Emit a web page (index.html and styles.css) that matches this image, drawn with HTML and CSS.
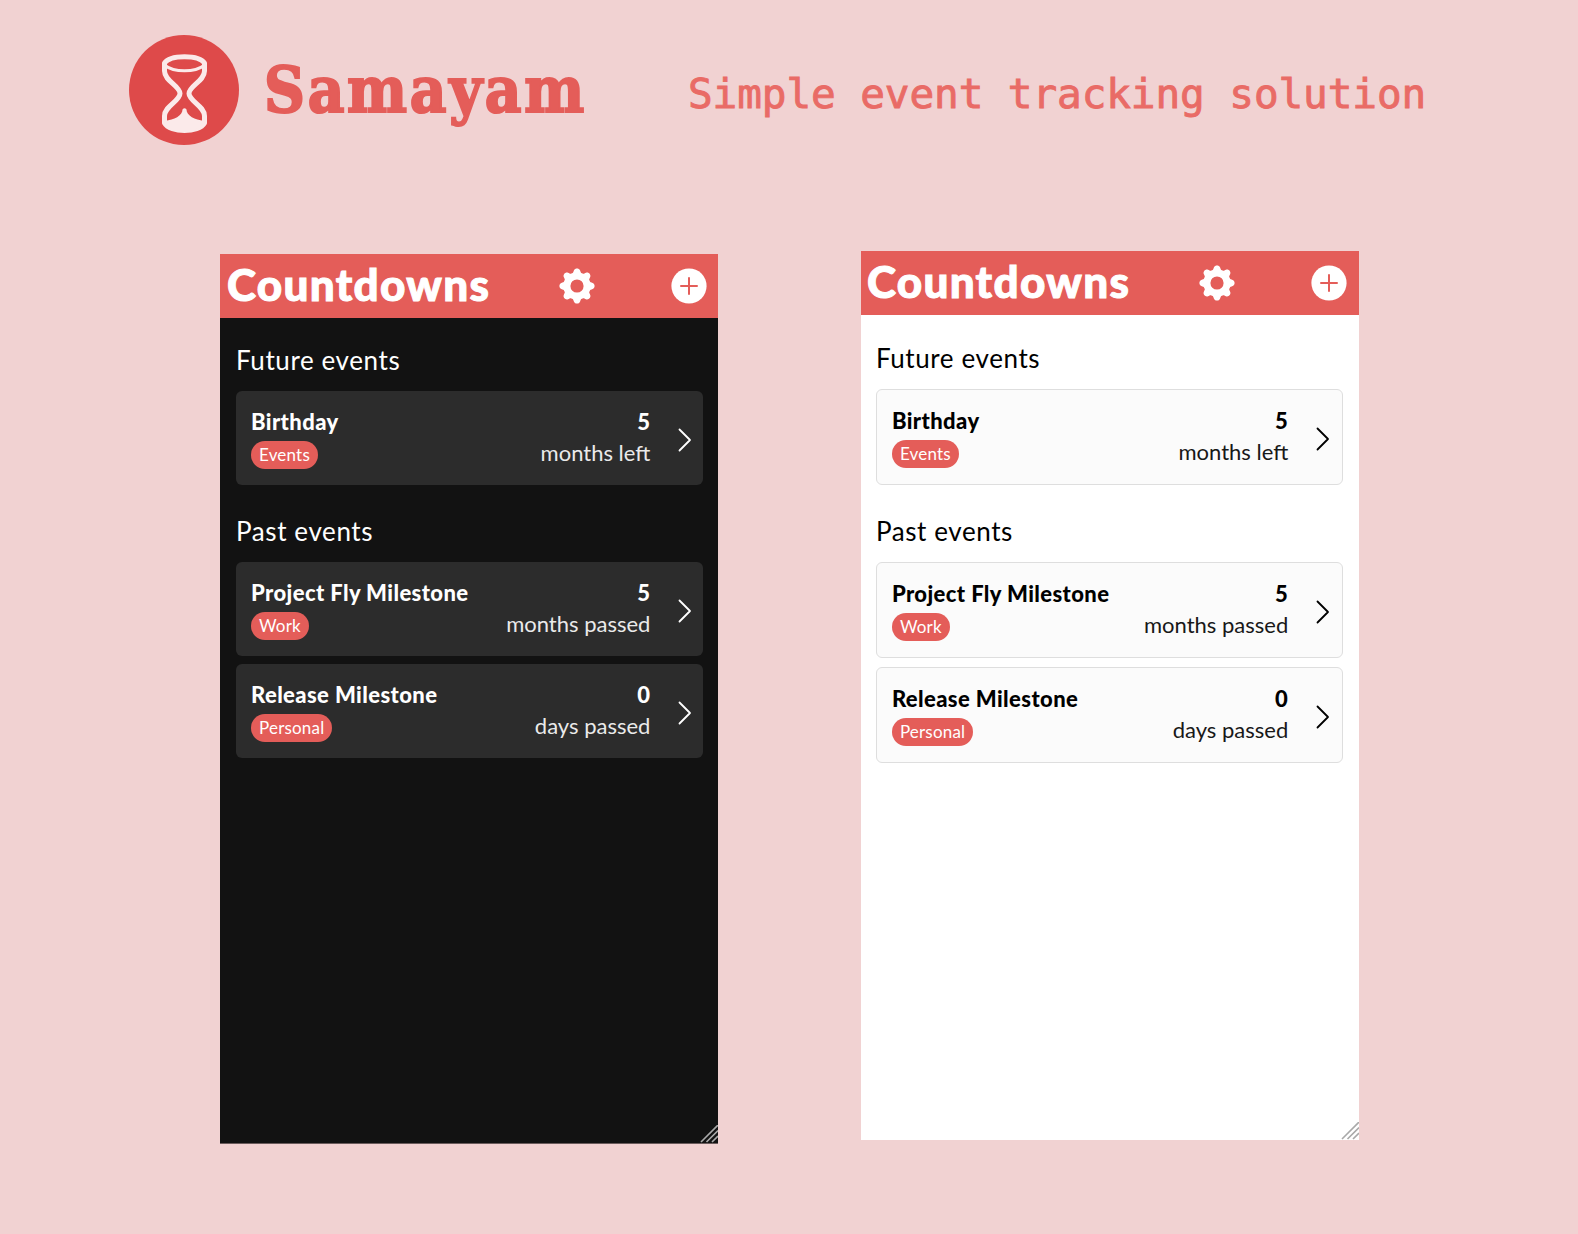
FILE: index.html
```
<!DOCTYPE html>
<html lang="en">
<head>
<meta charset="utf-8">
<title>Samayam</title>
<link rel="stylesheet" href="styles.css">
</head>
<body>
<svg class="defs" width="0" height="0" aria-hidden="true">
  <symbol id="gear" viewBox="-18 -18 36 36">
    <g fill="#fff">
      <path fill-rule="evenodd" d="M-13.500 0a13.500 13.500 0 1 0 27 0a13.500 13.500 0 1 0-27 0ZM-6.600 0a6.600 6.600 0 1 1 13.200 0a6.600 6.600 0 1 1-13.200 0Z"/>
      <path id="tooth" d="M-5.500-12C-3.600-13-3.600-14.200-3-15.700C-2-18.200 2-18.200 3-15.700C3.600-14.200 3.600-13 5.500-12Z"/>
      <use href="#tooth" transform="rotate(45)"/><use href="#tooth" transform="rotate(90)"/><use href="#tooth" transform="rotate(135)"/><use href="#tooth" transform="rotate(180)"/><use href="#tooth" transform="rotate(225)"/><use href="#tooth" transform="rotate(270)"/><use href="#tooth" transform="rotate(315)"/>
    </g>
  </symbol>
  <symbol id="plus" viewBox="0 0 36 36"><circle cx="18" cy="18" r="17.6" fill="#fff"/><path d="M18 10v16M10 18h16" stroke="#e45d59" stroke-width="2" stroke-linecap="round"/></symbol>
  <symbol id="chevron" viewBox="0 0 14 24"><path d="M1.5 1.5L12 12L1.5 22.500" fill="none" stroke="currentColor" stroke-width="1.8" stroke-linecap="round" stroke-linejoin="round"/></symbol>
  <symbol id="grip" viewBox="0 0 18 18"><path d="M1 17L18 0M6.500 17L18 5.500M12 17L18 11" stroke="currentColor" stroke-width="1.6"/></symbol>
</svg>

<header class="brand">
  <svg class="logo" viewBox="0 0 110 110">
    <circle cx="55" cy="55" r="55" fill="#de4a4a"/>
    <g fill="none" stroke="#fbeaea" stroke-width="5" stroke-linejoin="round">
      <path d="M35.500 28C41 19.500 70 19.500 75.500 28V36C75.500 46 60 51 60 58.500C60 66 75.500 71 75.500 81V88C70 98 41 98 35.500 88V81C35.500 71 51 66 51 58.500C51 51 35.500 46 35.500 36Z"/>
      <path d="M36 30.500C45 37.500 66 37.500 75 30.500" stroke-width="3"/>
    </g>
    <path d="M36 86C45 84.500 53.500 81 53.500 74.500Q55.500 72 57.500 74.500C57.500 81 66 84.500 75 86V89C69 98 42 98 36 89Z" fill="#fbeaea"/>
  </svg>
  <h1 class="name">Samayam</h1>
  <p class="tagline">Simple event tracking solution</p>
</header>

<main class="panels">
  <section class="panel dark">
    <div class="bar">
      <h2 class="bar-title">Countdowns</h2>
      <svg class="bar-icon gear"><use href="#gear"/></svg>
      <svg class="bar-icon"><use href="#plus"/></svg>
    </div>
    <div class="content">
      <h3 class="heading">Future events</h3>
      <div class="list">
        <article class="card">
          <div class="info"><div class="title">Birthday</div><span class="tag">Events</span></div>
          <div class="count"><div class="number">5</div><div class="unit">months left</div></div>
          <svg class="chevron"><use href="#chevron"/></svg>
        </article>
      </div>
      <h3 class="heading">Past events</h3>
      <div class="list">
        <article class="card">
          <div class="info"><div class="title">Project Fly Milestone</div><span class="tag">Work</span></div>
          <div class="count"><div class="number">5</div><div class="unit">months passed</div></div>
          <svg class="chevron"><use href="#chevron"/></svg>
        </article>
        <article class="card">
          <div class="info"><div class="title">Release Milestone</div><span class="tag">Personal</span></div>
          <div class="count"><div class="number">0</div><div class="unit">days passed</div></div>
          <svg class="chevron"><use href="#chevron"/></svg>
        </article>
      </div>
    </div>
    <svg class="grip"><use href="#grip"/></svg>
  </section>

  <section class="panel light">
    <div class="bar">
      <h2 class="bar-title">Countdowns</h2>
      <svg class="bar-icon gear"><use href="#gear"/></svg>
      <svg class="bar-icon"><use href="#plus"/></svg>
    </div>
    <div class="content">
      <h3 class="heading">Future events</h3>
      <div class="list">
        <article class="card">
          <div class="info"><div class="title">Birthday</div><span class="tag">Events</span></div>
          <div class="count"><div class="number">5</div><div class="unit">months left</div></div>
          <svg class="chevron"><use href="#chevron"/></svg>
        </article>
      </div>
      <h3 class="heading">Past events</h3>
      <div class="list">
        <article class="card">
          <div class="info"><div class="title">Project Fly Milestone</div><span class="tag">Work</span></div>
          <div class="count"><div class="number">5</div><div class="unit">months passed</div></div>
          <svg class="chevron"><use href="#chevron"/></svg>
        </article>
        <article class="card">
          <div class="info"><div class="title">Release Milestone</div><span class="tag">Personal</span></div>
          <div class="count"><div class="number">0</div><div class="unit">days passed</div></div>
          <svg class="chevron"><use href="#chevron"/></svg>
        </article>
      </div>
    </div>
    <svg class="grip"><use href="#grip"/></svg>
  </section>
</main>
</body>
</html>
```
FILE: styles.css
```
* { box-sizing: border-box; margin: 0; padding: 0; }

body {
  height: 1234px;
  overflow: hidden;
  background: #f1d2d2;
  font-family: Lato, "Open Sans", sans-serif;
}

.defs { display: block; }

.brand {
  display: flex;
  align-items: flex-start;
  height: 251px;
  padding: 35px 0 0 129px;
}

.logo { width: 110px; height: 110px; flex: none; }

.name {
  width: 422px;
  margin: 15px 0 0 25px;
  font: bold 63px/80px "DejaVu Serif Condensed", "DejaVu Serif", serif;
  font-stretch: condensed;
  letter-spacing: 2.7px;
  color: #e45d59;
  -webkit-text-stroke: 2px #e45d59;
  white-space: nowrap;
}

.tagline {
  margin: 33px 0 0 2px;
  font: 41px/52px "DejaVu Sans Mono", monospace;
  letter-spacing: -0.08px;
  color: #e96b66;
  -webkit-text-stroke: 0.9px #e96b66;
  white-space: nowrap;
}

.panels {
  display: flex;
  align-items: flex-start;
  gap: 142.5px;
  padding-left: 220px;
}

.panel {
  display: flex;
  flex-direction: column;
  width: 498.4px;
  height: 889px;
}

.dark { margin-top: 3px; height: 890px; background: #121212; color: #fff; border-bottom: 1px solid #6b5c5c; }
.light { background: #fff; color: #000; }

.bar {
  display: flex;
  align-items: center;
  height: 64px;
  flex: none;
  padding: 0 11px 0 7px;
  background: #e45d59;
  color: #fff;
}

.light .bar { padding: 0 12px 0 6px; }

.bar-title {
  width: 332px;
  padding-bottom: 4px;
  font-size: 44px;
  font-weight: 900;
  line-height: 52px;
  letter-spacing: 1.3px;
  -webkit-text-stroke: 1px #fff;
}

.bar-icon { width: 36px; height: 36px; flex: none; }
.gear { margin-right: auto; }

.content { flex: 1; padding: 26px 15px 0 16px; }
.light .content { padding: 27px 16px 0 15px; }

.heading {
  margin-bottom: 15px;
  font-size: 26px;
  font-weight: 400;
  line-height: 32px;
  letter-spacing: 0.6px;
}

.list { display: flex; flex-direction: column; gap: 8px; margin-bottom: 30px; }

.card {
  display: flex;
  align-items: flex-start;
  height: 94px;
  padding: 14px 11px 0 15px;
  border-radius: 6px;
  background: #2c2c2c;
}

.info { flex: 1; }

.title, .number { font-size: 22px; font-weight: 900; line-height: 34px; letter-spacing: 0.4px; }

.tag {
  display: block;
  width: fit-content;
  height: 28px;
  margin-top: 2px;
  padding: 0 8px;
  border-radius: 14px;
  background: #e45d59;
  color: #fff;
  font-size: 17px;
  line-height: 27px;
  letter-spacing: 0.2px;
}

.count { text-align: right; }
.unit { font-size: 22px; line-height: 28px; opacity: 0.9; }

.chevron { width: 14px; height: 24px; margin: 23px 0 0 28px; }

.grip { width: 18px; height: 18px; margin-left: auto; color: #a9a9a9; }

.light .card {
  height: 96px;
  padding: 14px 12px 0 15px;
  border: 1px solid #dedede;
  background: #fbfbfb;
}
.light .list { gap: 8.5px; }
```
